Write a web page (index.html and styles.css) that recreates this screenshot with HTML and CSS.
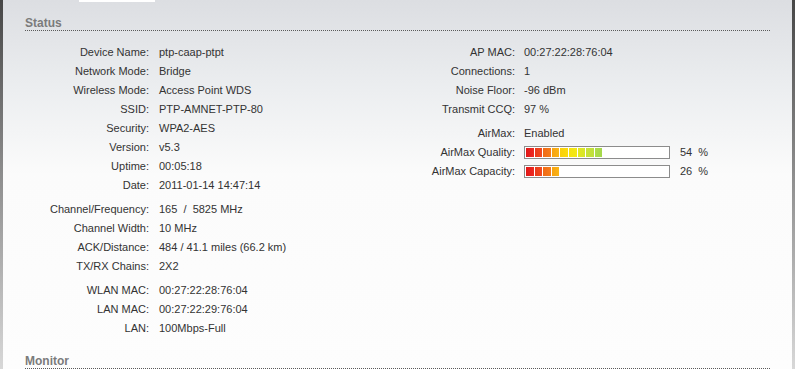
FILE: index.html
```html
<!DOCTYPE html>
<html>
<head>
<meta charset="utf-8">
<title>Status</title>
<link rel="stylesheet" href="styles.css">
</head>
<body>
<div class="frame">
  <div class="tabline"></div>
  <section class="section status">
    <h2 class="sec-title">Status</h2>
    <div class="cols">
      <div class="col col-left">
        <div class="grid">
          <span class="lbl">Device Name:</span><span class="val">ptp-caap-ptpt</span>
          <span class="lbl">Network Mode:</span><span class="val">Bridge</span>
          <span class="lbl">Wireless Mode:</span><span class="val">Access Point WDS</span>
          <span class="lbl">SSID:</span><span class="val">PTP-AMNET-PTP-80</span>
          <span class="lbl">Security:</span><span class="val">WPA2-AES</span>
          <span class="lbl">Version:</span><span class="val">v5.3</span>
          <span class="lbl">Uptime:</span><span class="val">00:05:18</span>
          <span class="lbl">Date:</span><span class="val">2011-01-14 14:47:14</span>
        </div>
        <div class="grid">
          <span class="lbl">Channel/Frequency:</span><span class="val">165 &nbsp;/ &nbsp;5825 MHz</span>
          <span class="lbl">Channel Width:</span><span class="val">10 MHz</span>
          <span class="lbl">ACK/Distance:</span><span class="val">484 / 41.1 miles (66.2 km)</span>
          <span class="lbl">TX/RX Chains:</span><span class="val">2X2</span>
        </div>
        <div class="grid">
          <span class="lbl">WLAN MAC:</span><span class="val">00:27:22:28:76:04</span>
          <span class="lbl">LAN MAC:</span><span class="val">00:27:22:29:76:04</span>
          <span class="lbl">LAN:</span><span class="val">100Mbps-Full</span>
        </div>
      </div>
      <div class="col col-right">
        <div class="grid">
          <span class="lbl">AP MAC:</span><span class="val">00:27:22:28:76:04</span>
          <span class="lbl">Connections:</span><span class="val">1</span>
          <span class="lbl">Noise Floor:</span><span class="val">-96 dBm</span>
          <span class="lbl">Transmit CCQ:</span><span class="val">97 %</span>
        </div>
        <div class="grid">
          <span class="lbl">AirMax:</span><span class="val">Enabled</span>
          <span class="lbl">AirMax Quality:</span>
          <span class="val meter">
            <span class="bar"><span class="seg s1"></span><span class="seg s2"></span><span class="seg s3"></span><span class="seg s4"></span><span class="seg s5"></span><span class="seg s6"></span><span class="seg s7"></span><span class="seg s8"></span><span class="seg s9"></span></span>
            <span class="pct">54&nbsp; %</span>
          </span>
          <span class="lbl">AirMax Capacity:</span>
          <span class="val meter">
            <span class="bar"><span class="seg s1"></span><span class="seg s2"></span><span class="seg s3"></span><span class="seg s4"></span></span>
            <span class="pct">26&nbsp; %</span>
          </span>
        </div>
      </div>
    </div>
  </section>
  <section class="section monitor">
    <h2 class="sec-title">Monitor</h2>
  </section>
</div>
</body>
</html>
```

FILE: styles.css
```css
html, body {
  margin: 0;
  padding: 0;
  height: 100%;
  overflow: hidden;
}

body {
  font-family: "Liberation Sans", Arial, sans-serif;
  font-size: 11px;
  color: #333;
}

.frame {
  box-sizing: border-box;
  min-height: 369px;
  height: 100%;
  border-style: solid;
  border-width: 0 3px;
  border-image: linear-gradient(#464646 0%, #8a8a8a 45%, #d8d8d8 100%) 1;
  background: linear-gradient(#dcdee2 0px, #eceef0 90px, #fbfbfb 175px, #fdfdfd 100%);
}

.tabline {
  height: 2px;
  width: 76px;
  margin-left: 76px;
  background: #fff;
}

.section {
  padding: 0 22px;
}

.status {
  padding-bottom: 2px;
}

.sec-title {
  margin: 14px 0 0;
  font-size: 12px;
  line-height: 14px;
  font-weight: bold;
  color: #7b7b7b;
  border-bottom: 1px dotted #5a5a5a;
}

.cols {
  display: flex;
  margin-top: 12px;
}

.col-left {
  width: 365px;
}

.col-right {
  flex: 1;
}

.grid {
  display: grid;
  grid-auto-rows: 19px;
  align-items: center;
  line-height: 19px;
  margin-bottom: 5px;
}

.grid:last-child {
  margin-bottom: 0;
}

.col-left .grid {
  grid-template-columns: 124px 1fr;
  column-gap: 10px;
}

.col-right .grid {
  grid-template-columns: 125px 1fr;
  column-gap: 9px;
}

.lbl {
  text-align: right;
  white-space: nowrap;
}

.val {
  white-space: nowrap;
}

.meter {
  display: flex;
  align-items: center;
}

.bar {
  box-sizing: border-box;
  width: 146px;
  height: 13px;
  border: 1px solid #8c8c8c;
  background: #fff;
  padding: 1px;
  display: flex;
  gap: 1px;
}

.seg {
  width: 7.6px;
  height: 9px;
  flex: none;
}

.s1 { background: linear-gradient(90deg, #e01818, #ee2a22); }
.s2 { background: linear-gradient(90deg, #ea3a1c, #f24a1e); }
.s3 { background: linear-gradient(90deg, #f06a16, #f67c18); }
.s4 { background: linear-gradient(90deg, #f7a212, #fab414); }
.s5 { background: linear-gradient(90deg, #fbd00a, #fcdc0c); }
.s6 { background: linear-gradient(90deg, #f6e40e, #f3e816); }
.s7 { background: linear-gradient(90deg, #e2e820, #d8e628); }
.s8 { background: linear-gradient(90deg, #c9e236, #bfe03c); }
.s9 { background: linear-gradient(90deg, #aedc48, #a4d84c); }

.pct {
  margin-left: 10px;
}

.monitor .sec-title {
  margin-top: 14px;
}
```
